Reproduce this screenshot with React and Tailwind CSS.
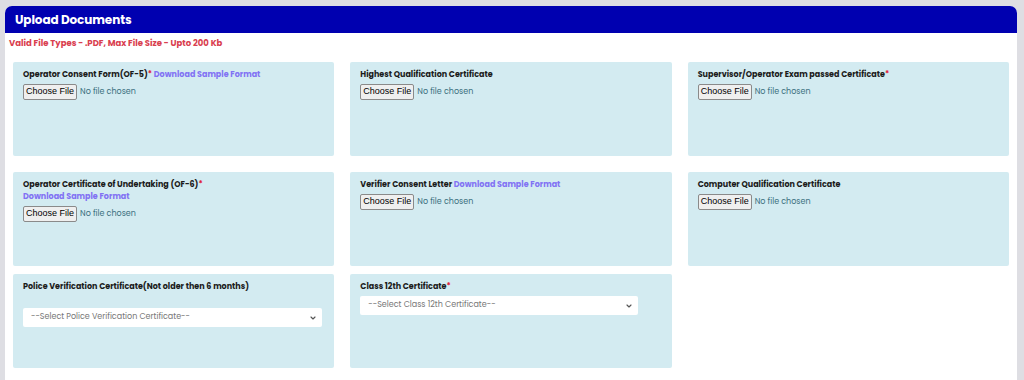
import { ChevronDown } from "lucide-react";

const font = "font-['Poppins','Inter','Noto_Sans',sans-serif]";

function Req() {
    return <span className="text-[#e0203a]">*</span>;
}

function Sample() {
    return <span className="text-[#8172f4]">Download Sample Format</span>;
}

function FileInput() {
    return (
        <input
            type="file"
            className="block font-normal text-[8px] text-[#3b7080] file:mr-[3px] file:h-[16px] file:border file:border-[#8a8a8a] file:bg-[#efefef] file:rounded-[2px] file:px-[2px] file:text-black file:font-normal file:font-['Liberation_Sans'] file:text-[9px]"
        />
    );
}

function Box({ children, className = "" }) {
    return (
        <div className={`h-[94px] bg-[#d3ebf1] rounded-[2px] px-[10px] pt-[7px] ${className}`}>
            {children}
        </div>
    );
}

function Select({ text, width }) {
    return (
        <div className={`relative ${width}`}>
            <select className="appearance-none w-full h-[19px] bg-white rounded-[2px] pl-[8px] text-[8px] font-normal text-[#777] outline-none">
                <option>{text}</option>
            </select>
            <ChevronDown className="absolute right-[5px] top-[6px] w-[8px] h-[8px] text-[#555]" strokeWidth={3.5} />
        </div>
    );
}

export default function App() {
    return (
        <div className={`bg-[#dedee3] pl-[5px] pr-[7px] pt-[6px] h-[380px] ${font}`}>
            <div className="bg-white rounded-t-[7px] h-full">
                <div className="h-[27px] bg-[#0000b0] rounded-t-[7px] px-[10px] flex items-center">
                    <h2 className="text-white font-bold text-[12px] tracking-[-0.1px]">Upload Documents</h2>
                </div>
                <p className="px-[4px] mt-[4px] text-[8.5px] font-bold text-[#d9404f]">
                    Valid File Types - .PDF, Max File Size - Upto 200 Kb
                </p>
                <div className="grid grid-cols-3 gap-x-[16px] px-[8px] mt-[12px] text-[8px] font-bold text-[#1b1b1b]">
                    <Box className="mb-[16px]">
                        <p className="mb-[3px]">Operator Consent Form(OF-5)<Req /> <Sample /></p>
                        <FileInput />
                    </Box>
                    <Box className="mb-[16px]">
                        <p className="mb-[3px]">Highest Qualification Certificate</p>
                        <FileInput />
                    </Box>
                    <Box className="mb-[16px]">
                        <p className="mb-[3px]">Supervisor/Operator Exam passed Certificate<Req /></p>
                        <FileInput />
                    </Box>

                    <Box className="mb-[8px]">
                        <p>Operator Certificate of Undertaking (OF-6)<Req /></p>
                        <p className="mb-[3px]"><Sample /></p>
                        <FileInput />
                    </Box>
                    <Box className="mb-[8px]">
                        <p className="mb-[3px]">Verifier Consent Letter <Sample /></p>
                        <FileInput />
                    </Box>
                    <Box className="mb-[8px]">
                        <p className="mb-[3px]">Computer Qualification Certificate</p>
                        <FileInput />
                    </Box>

                    <Box>
                        <p className="mb-[15px]">Police Verification Certificate(Not older then 6 months)</p>
                        <Select text="--Select Police Verification Certificate--" width="w-[299px]" />
                    </Box>
                    <Box>
                        <p className="mb-[3px]">Class 12th Certificate<Req /></p>
                        <Select text="--Select Class 12th Certificate--" width="w-[278px]" />
                    </Box>
                    <div />
                </div>
            </div>
        </div>
    );
}
